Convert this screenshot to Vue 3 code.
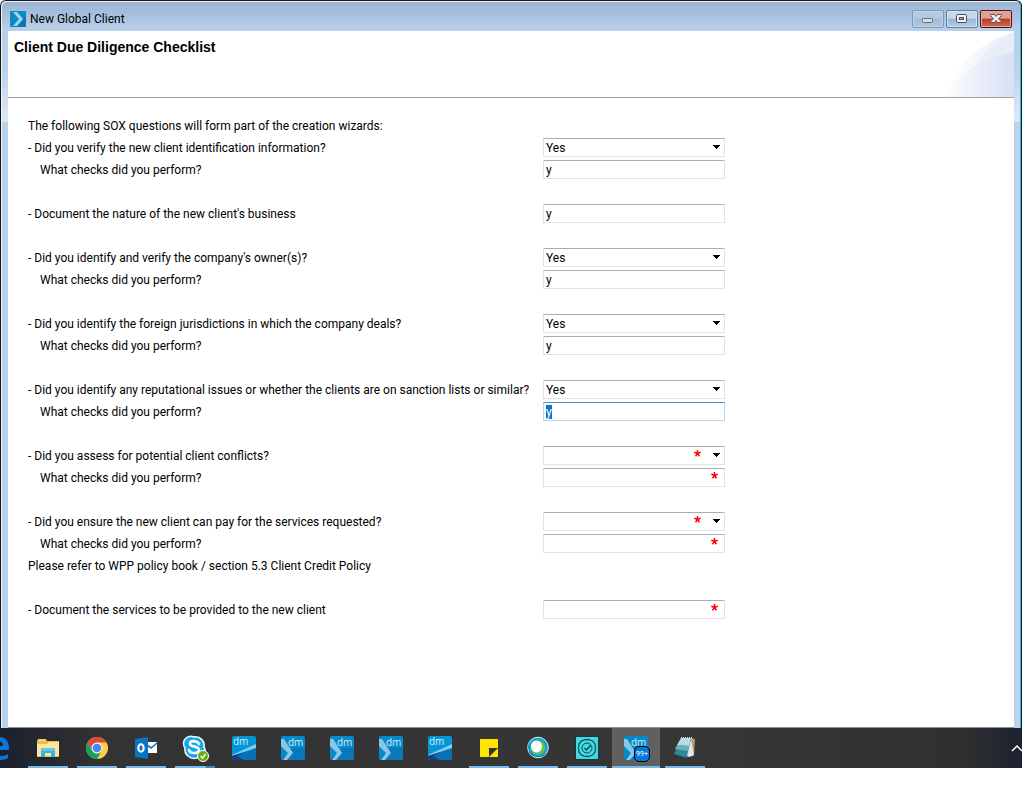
<script setup>
import { onMounted, reactive } from 'vue'

const form = reactive({
  verified: 'Yes', verifiedChecks: 'y', nature: 'y',
  owners: 'Yes', ownersChecks: 'y',
  foreign: 'Yes', foreignChecks: 'y',
  reputation: 'Yes', reputationChecks: 'y',
  conflicts: '', conflictsChecks: '',
  payment: '', paymentChecks: '', services: ''
})

const rows = [
  { text: 'The following SOX questions will form part of the creation wizards:' },
  { id: 'verified', type: 'select', text: '- Did you verify the new client identification information?' },
  { id: 'verifiedChecks', type: 'text', sub: true, text: 'What checks did you perform?' },
  {},
  { id: 'nature', type: 'text', text: '- Document the nature of the new client\'s business' },
  {},
  { id: 'owners', type: 'select', text: '- Did you identify and verify the company\'s owner(s)?' },
  { id: 'ownersChecks', type: 'text', sub: true, text: 'What checks did you perform?' },
  {},
  { id: 'foreign', type: 'select', text: '- Did you identify the foreign jurisdictions in which the company deals?' },
  { id: 'foreignChecks', type: 'text', sub: true, text: 'What checks did you perform?' },
  {},
  { id: 'reputation', type: 'select', text: '- Did you identify any reputational issues or whether the clients are on sanction lists or similar?' },
  { id: 'reputationChecks', type: 'text', sub: true, text: 'What checks did you perform?' },
  {},
  { id: 'conflicts', type: 'select', required: true, text: '- Did you assess for potential client conflicts?' },
  { id: 'conflictsChecks', type: 'text', required: true, sub: true, text: 'What checks did you perform?' },
  {},
  { id: 'payment', type: 'select', required: true, text: '- Did you ensure the new client can pay for the services requested?' },
  { id: 'paymentChecks', type: 'text', required: true, sub: true, text: 'What checks did you perform?' },
  { text: 'Please refer to WPP policy book / section 5.3 Client Credit Policy' },
  {},
  { id: 'services', type: 'text', required: true, text: '- Document the services to be provided to the new client' }
]

const tasks = [
  { icon: 'edge', label: 'Edge' },
  { icon: 'folder', label: 'File Explorer', open: true },
  { icon: 'chrome', label: 'Chrome', open: true },
  { icon: 'outlook', label: 'Outlook', open: true },
  { icon: 'skype', label: 'Skype', open: true, stacked: true },
  { icon: 'swoosh', label: 'dm' },
  { icon: 'chevron', label: 'dm' },
  { icon: 'chevron', label: 'dm' },
  { icon: 'chevron', label: 'dm' },
  { icon: 'swoosh', label: 'dm' },
  { icon: 'notes', label: 'Sticky Notes', open: true },
  { icon: 'webex', label: 'Meetings', open: true },
  { icon: 'gear', label: 'Verification', open: true },
  { icon: 'chevron', label: 'dm', open: true, active: true, badge: '99+' },
  { icon: 'notepad', label: 'Notepad', open: true }
]

onMounted(() => {
  const field = document.getElementById('reputationChecks')
  field.focus()
  field.select()
})
</script>

<template>
  <div class="desktop">
    <main class="window">
      <header class="titlebar">
        <svg class="app-icon" viewBox="0 0 16 16" aria-hidden="true">
          <rect width="16" height="16" rx="1" fill="#078bc8" />
          <path d="M0 16h16V6L4 16z" fill="#0878b8" />
          <path d="M3 1h4l6 7-6 7H3l6-7z" fill="#a5d5ee" />
        </svg>
        <span class="caption">New Global Client</span>
        <div class="controls">
          <button class="control dim" aria-label="Minimize">
            <svg viewBox="0 0 32 18"><rect x="10.500" y="8.500" width="10" height="4" rx="1" fill="#ddd" stroke="#666c78" /></svg>
          </button>
          <button class="control" aria-label="Maximize">
            <svg viewBox="0 0 32 18"><rect x="10.500" y="4.500" width="10" height="8" rx="1" fill="#f2f2f4" stroke="#464b62" /><rect x="13.500" y="7.500" width="4" height="2" fill="#92abc9" stroke="#464b62" /></svg>
          </button>
          <button class="control close" aria-label="Close">
            <svg viewBox="0 0 32 18"><path d="M10.500 4.500h4l1.500 2 1.500-2h4v1l-3 3.300 3 3v.7h-4l-1.500-2-1.500 2h-4v-.7l3-3-3-3.300z" fill="#f3f3f4" stroke="#5a4a5c" /></svg>
          </button>
        </div>
      </header>
      <div class="client">
        <section class="banner">
          <h1>Client Due Diligence Checklist</h1>
          <svg class="arc" viewBox="0 0 72 66" aria-hidden="true">
            <defs>
              <linearGradient id="arcOuter"><stop offset="0" stop-color="#fff" /><stop offset=".4" stop-color="#f6f8fd" /><stop offset="1" stop-color="#e9edf9" /></linearGradient>
              <linearGradient id="arcInner"><stop offset="0" stop-color="#fff" /><stop offset=".5" stop-color="#eaeefa" /><stop offset="1" stop-color="#d9e1f5" /></linearGradient>
            </defs>
            <path d="M2 66Q24 14 72 1V66z" fill="url(#arcOuter)" />
            <path d="M2 66Q27 28 72 21V66z" fill="url(#arcInner)" />
            <path d="M34 35Q47 11 72 2V21Q51 24 34 35z" fill="#e6ebf9" opacity=".6" />
          </svg>
        </section>
        <form class="questions" @submit.prevent>
          <div v-for="(row, i) in rows" :key="i" class="row">
            <label v-if="row.id" :for="row.id" :class="{ sub: row.sub }">{{ row.text }}</label>
            <p v-else-if="row.text">{{ row.text }}</p>
            <div v-if="row.id" class="field" :class="row.type">
              <select v-if="row.type === 'select'" :id="row.id" v-model="form[row.id]">
                <option value=""></option>
                <option>Yes</option>
                <option>No</option>
              </select>
              <input v-else :id="row.id" v-model="form[row.id]" type="text" autocomplete="off">
              <svg v-if="row.type === 'select'" class="arrow" viewBox="0 0 7 4" aria-hidden="true"><path d="M0 0h7v1H6v1H5v1H4v1H3V3H2V2H1V1H0z" fill="#000" shape-rendering="crispEdges" /></svg>
              <svg v-if="row.required" class="star" viewBox="0 0 7 7" aria-hidden="true"><path d="M3.500 0v3.500M.3 2.300l3.200 1.200 3.200-1.200M1.500 6.300l2-2.800 2 2.800" fill="none" stroke="#f00" stroke-width="1.500" /></svg>
            </div>
          </div>
        </form>
      </div>
    </main>

    <nav class="taskbar" aria-label="Taskbar">
      <button v-for="(t, i) in tasks" :key="i" class="task" :class="{ open: t.open, active: t.active, stacked: t.stacked }" :aria-label="t.label">
        <svg v-if="t.icon === 'edge'" viewBox="0 0 24 24"><path d="M1 11C2 4 7 1 12 1c7 0 10 5 10 11v2H8c0 4 3 6 7 6 3 0 4-1 6-2v4c-2 1-4 2-7 2C7 24 3 20 3 14c0-4 3-7 6-8-2 2-2 3-2 4h9c0-3-2-5-5-5C7 5 3 8 1 11z" fill="#0a78d4" /></svg>
        <svg v-else-if="t.icon === 'folder'" viewBox="0 0 24 24"><path d="M2 3h8l1 2h12v16H1V5z" fill="#e9bd52" /><path d="M3 3h6v2H3z" fill="#fbd760" /><path d="M1 8h10l2-2h10v14H1z" fill="#ffe69b" /><path d="M5 21v-7q0-2 2-2h10q2 0 2 2v7h-4v-4H9v4z" fill="#36b3e5" /><path d="M5 14q0-2 2-2h10q2 0 2 2v1H5z" fill="#65c8ef" /></svg>
        <svg v-else-if="t.icon === 'chrome'" viewBox="0 0 24 24"><circle cx="12" cy="12" r="11" fill="#fc4" /><path d="M2.470 6.500A11 11 0 0 1 21.500 6.500H12L7.240 14.750z" fill="#db4a3b" /><path d="M2.470 6.500A11 11 0 0 0 12 23l4.800-8.300L12 17.500 7.240 14.750z" fill="#18a15e" /><circle cx="12" cy="12" r="5.500" fill="#f2f2f2" /><circle cx="12" cy="12" r="4.300" fill="#4788f4" /></svg>
        <svg v-else-if="t.icon === 'outlook'" viewBox="0 0 24 24"><path d="M11 6h12v11H11z" fill="#fff" /><path d="M13 9l4 3 6-5" fill="none" stroke="#0874c5" stroke-width="1.600" /><path d="M1 3l13-2v22L1 21z" fill="#0874c5" /><ellipse cx="7" cy="12" rx="2.700" ry="3.700" fill="none" stroke="#fff" stroke-width="2" /></svg>
        <svg v-else-if="t.icon === 'skype'" viewBox="0 0 24 24"><path d="M2 3Q6-1 11 1c6-1 11 4 10 10 3 5-1 11-7 11C7 24 1 18 2 12 0 9 0 6 2 3z" fill="#12aaea" stroke="#f3fcff" stroke-width="1.500" /><path d="M16 8c-1-3-8-4-9-1-1 5 9 2 9 7 0 4-9 4-10 0" fill="none" stroke="#fff" stroke-width="2.600" stroke-linecap="round" /><circle cx="20" cy="20" r="5.500" fill="#68ae10" stroke="#fff" /><path d="M17.500 20l2 2 3-4" fill="none" stroke="#fff" stroke-width="1.500" /></svg>
        <svg v-else-if="t.icon === 'swoosh'" viewBox="0 0 24 24"><rect width="24" height="24" rx="2" fill="#0495d8" /><path d="M0 19L24 8v5L0 20z" fill="#83cdec" /><path d="M0 20l24-8v10q0 2-2 2H2q-2 0-2-2z" fill="#0870b3" /><path d="M0 20l13-4-8 4 7 4H2q-2 0-2-2z" fill="#183e82" /><text x="1" y="9" class="dm">dm</text></svg>
        <svg v-else-if="t.icon === 'chevron'" viewBox="0 0 24 24"><rect width="24" height="24" rx="2" fill="#078bc8" /><path d="M0 24L12 12h12v10q0 2-2 2z" fill="#0878ba" /><path d="M0 3h3l9 14-6 7H2l5-7L0 10z" fill="#8bc7e5" /><text x="7" y="10" class="dm">dm</text></svg>
        <svg v-else-if="t.icon === 'notes'" viewBox="0 0 24 24"><path d="M3 3h18v18H3z" fill="#ffe400" /><path d="M12 21v-9h9z" fill="#333" /></svg>
        <svg v-else-if="t.icon === 'webex'" viewBox="0 0 24 24"><circle cx="12" cy="11.500" r="10.300" fill="#11a7d4" stroke="#dcecef" /><path d="M3 7a10 10 0 0 0 17 10C17 23 5 22 3 15z" fill="#064662" /><circle cx="12" cy="11.500" r="7" fill="#6bc342" /><ellipse cx="10.500" cy="10.500" rx="5.500" ry="6" fill="#fff" /></svg>
        <svg v-else-if="t.icon === 'gear'" viewBox="0 0 24 24"><path d="M.5.500h23v23H.5z" fill="#48d8e0" stroke="#053d50" /><path d="M12 4Q14 2.500 15.500 4.500 18 4 18.500 6.500 21 7.500 20 10 21.500 12 20 14 21 16.500 18.500 17.500 18 20 15.500 19.500 14 21.500 12 20 10 21.500 8.500 19.500 6 20 5.500 17.500 3 16.500 4 14 2.500 12 4 10 3 7.500 5.500 6.500 6 4 8.500 4.500 10 2.500 12 4z" fill="none" stroke="#07505c" stroke-width="1.200" /><circle cx="12" cy="12" r="5" fill="none" stroke="#07505c" /><path d="M9.500 12l2 2 4-4.500" fill="none" stroke="#07505c" stroke-width="1.500" /></svg>
        <svg v-else viewBox="0 0 24 24"><path d="M18 2l4 1-1 16-3 2z" fill="#b99a68" /><path d="M8 2h10l-4 20-13-4z" fill="#2e8994" /><path d="M8 2h10l-2 8-12-1z" fill="#b4dfe5" /><path d="M4 9l12 1-1 5-13-2z" fill="#6aafba" /><path d="M18 3l3 16-5 2-2-1z" fill="#dce8e8" /><path d="M8 2h11" stroke="#d7e0e0" stroke-width="2" stroke-dasharray="1 1" /></svg>
        <span v-if="t.badge" class="badge">{{ t.badge }}</span>
      </button>
      <button class="tray" aria-label="Show hidden icons">
        <svg viewBox="0 0 12 8"><path d="M1 7l5-5 5 5" fill="none" stroke="#fff" stroke-width="1.500" /></svg>
      </button>
    </nav>
  </div>
</template>

<style>
body { margin: 0; background: #fff; }
</style>

<style scoped>
* { box-sizing: border-box; }
.desktop {
  display: flex;
  flex-direction: column;
  min-height: 100vh;
  padding-bottom: 20px;
  overflow: hidden;
  font-family: Roboto, "Noto Sans", sans-serif;
  font-size: 12px;
  color: #000;
}
button { padding: 0; border: 0; background: none; font: inherit; }
.window {
  flex: 1;
  display: flex;
  flex-direction: column;
  padding: 2px 7px 0;
  border: 1px solid #16161c;
  border-bottom: 0;
  border-radius: 6px 6px 0 0;
  background: linear-gradient(#9ab3d2, #b7cfe8 28px, #bcd3eb 70px, #dde9f6 120px, #bad2ea 121px);
  box-shadow: inset 1px 1px #eef4fa, inset -1px 0 #27c3ee;
}
.titlebar { display: flex; align-items: center; height: 28px; padding: 4px 2px 0; }
.app-icon { width: 16px; height: 16px; }
.caption { flex: 1; padding-left: 4px; line-height: 18px; }
.controls { display: flex; gap: 2px; }
.control {
  width: 32px;
  height: 18px;
  border: 1px solid #66809f;
  border-radius: 2px;
  background: linear-gradient(#c7d8eb 45%, #9bb5d2 50%, #b5cee7);
  box-shadow: inset 0 0 0 1px #d2e1f0;
}
.control svg { display: block; width: 32px; height: 18px; margin: -1px; }
.dim { border-color: #8199b6; background: linear-gradient(#b4cae2 45%, #a0bad6 50%, #b1cae4); box-shadow: inset 0 0 0 1px #bed2e8; }
.close { border-color: #4b1420; background: linear-gradient(#dfa193 45%, #bd3c25 50%, #cf6b50); box-shadow: inset 0 0 0 1px #e6a999; }
.client { flex: 1; border-bottom: 1px solid #8c8c8c; background: #fff; }
.banner {
  display: flex;
  justify-content: space-between;
  height: 67px;
  border-bottom: 1px solid #a0a0a0;
}
h1 { margin: 0; padding: 8px 6px; font: bold 14px/16px "Liberation Sans", Arial, sans-serif; }
.arc { width: 72px; height: 66px; }
.questions { padding: 17px 20px; }
.row { display: grid; grid-template-columns: 515px 182px; height: 22px; line-height: 22px; white-space: nowrap; }
.row p { margin: 0; }
.sub { padding-left: 12px; }
.field { position: relative; height: 19px; margin-top: 1px; }
.field input, .field select {
  display: block;
  width: 100%;
  height: 19px;
  margin: 0;
  padding: 0 2px;
  border: 1px solid #e2e3ea;
  border-top-color: #abadb3;
  border-radius: 0;
  outline: 0;
  appearance: none;
  background: #fff;
  color: #000;
  font: inherit;
  line-height: 17px;
}
.field select { padding-top: 1px; }
.field input:focus { border-color: #5794bf #b7d5ea #b7d5ea; }
.field input::selection { background: #0078d7; color: #fff; }
.arrow { position: absolute; top: 7px; right: 5px; width: 7px; height: 4px; pointer-events: none; }
.star { position: absolute; top: 4px; right: 7px; width: 7px; height: 7px; pointer-events: none; }
.select .star { right: 24px; }
.taskbar {
  position: relative;
  display: flex;
  gap: 1px;
  height: 40px;
  overflow: hidden;
  background: linear-gradient(90deg, #1b202d, #333 10%, #363636 70%, #303030 94%, #1c2230);
}
.task { position: relative; flex: 0 0 48px; display: grid; place-items: center; height: 40px; }
.task:first-child { margin-left: -25px; }
.task svg { display: block; width: 24px; height: 24px; overflow: visible; }
.open::after { content: ""; position: absolute; left: 4px; right: 4px; bottom: 0; height: 2px; background: #76b9ed; }
.stacked::after { background: linear-gradient(90deg, #76b9ed 31px, #355a7c 31px, #4f81ad 32px); }
.active { background: #606060; }
.active::after { left: 0; right: 0; }
.dm { fill: #d4edf8; font: 10px "Open Sans", sans-serif; }
.badge {
  position: absolute;
  left: 22px;
  top: 18px;
  width: 16px;
  height: 16px;
  border: 1px solid #000;
  border-radius: 5px;
  background: #0878d8;
  color: #fff;
  font-size: 7px;
  line-height: 14px;
  text-align: center;
}
.tray { margin-left: auto; margin-right: -1px; flex: 0 0 12px; display: grid; place-items: center; }
.tray svg { width: 12px; height: 8px; }
</style>
